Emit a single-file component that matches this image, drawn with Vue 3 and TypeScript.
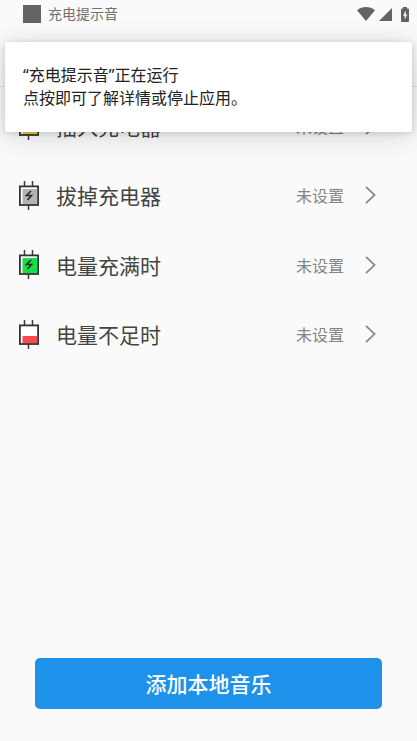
<script setup lang="ts">
interface Row {
  label: string
  value: string
  fill: string
  level: number
  bolt: boolean
}

const appName = '充电提示音'

const rows: Row[] = [
  { label: '插入充电器', value: '未设置', fill: '#f0cb3a', level: 15, bolt: true },
  { label: '拔掉充电器', value: '未设置', fill: '#b3b3b3', level: 15, bolt: true },
  { label: '电量充满时', value: '未设置', fill: '#14df46', level: 15, bolt: true },
  { label: '电量不足时', value: '未设置', fill: '#fb4a4a', level: 7, bolt: false },
]
</script>

<template>
  <div class="screen">
    <header class="status">
      <span class="app-mark"></span>
      <span class="app-name">{{ appName }}</span>
      <svg class="wifi" viewBox="0 0 18 14" aria-hidden="true">
        <path d="M9 14 0 3.2C2.6 1 5.700 0 9 0s6.400 1 9 3.200z" />
      </svg>
      <svg class="signal" viewBox="0 0 13 13" aria-hidden="true">
        <path d="M13 0v13H0z" />
      </svg>
      <svg class="battery" viewBox="0 0 8 15" aria-hidden="true">
        <path d="M2 0h4v1.500h1a1 1 0 0 1 1 1V14a1 1 0 0 1-1 1H1a1 1 0 0 1-1-1V2.500a1 1 0 0 1 1-1h1z" />
        <path class="battery-bolt" d="M4.700 3.500 2 8.800h1.700v3.700L6.200 7.500H4.700z" />
      </svg>
    </header>
    <div class="toolbar"></div>

    <ul class="list">
      <li v-for="row in rows" :key="row.label">
        <button type="button" class="row">
          <svg class="plug" viewBox="0 0 20 29" aria-hidden="true">
            <path class="line" d="M5.500 0v5M13.500 0v5M9.500 24v5" />
            <rect class="case" x="0.900" y="5.400" width="18.200" height="18.600" />
            <rect x="3.500" :y="23 - row.level" width="14.500" :height="row.level" :fill="row.fill" />
            <path v-if="row.bolt" class="bolt" d="M12 10 7.500 14.500h5L8.500 19" />
          </svg>
          <span class="label">{{ row.label }}</span>
          <span class="value">{{ row.value }}</span>
          <svg class="chevron" viewBox="0 0 11 18" aria-hidden="true">
            <path d="M1 .8 9.600 9 1 17.200" />
          </svg>
        </button>
      </li>
    </ul>

    <footer class="footer">
      <button type="button" class="add">添加本地音乐</button>
    </footer>

    <div class="notice" role="status">
      “{{ appName }}”正在运行<br />点按即可了解详情或停止应用。
    </div>
  </div>
</template>

<style>
body {
  background: #fafafa;
}
</style>

<style scoped>
.screen {
  position: relative;
  display: flex;
  flex-direction: column;
  min-height: 100vh;
  overflow: hidden;
  background: #fafafa;
  font-family: "Noto Sans", "Noto Sans CJK SC", sans-serif;
}

button {
  margin: 0;
  border: 0;
  font: inherit;
}

.status {
  display: flex;
  align-items: center;
  height: 28px;
  padding: 0 8px 0 23px;
  color: #707070;
}

.app-mark {
  width: 18px;
  height: 18px;
  background: #646464;
}

.app-name {
  flex: 1;
  margin-left: 7px;
  font-size: 14px;
  line-height: 20px;
}

.status svg {
  fill: #636363;
}

.wifi {
  width: 18px;
  height: 14px;
}

.signal {
  width: 13px;
  height: 13px;
  margin-left: 4px;
}

.battery {
  width: 8px;
  height: 15px;
  margin-left: 9px;
}

.status .battery-bolt {
  fill: #fafafa;
}

.toolbar {
  height: 58px;
  border-bottom: 1px solid #e0e0e0;
}

.list {
  display: grid;
  grid-template-rows: repeat(4, 1fr);
  height: 278px;
  margin: 4px 0 0;
  padding: 0;
  list-style: none;
}

.row {
  display: flex;
  align-items: center;
  width: 100%;
  height: 100%;
  padding: 0 41px 0 19px;
  background: none;
  text-align: left;
}

.plug {
  width: 20px;
  height: 29px;
}

.line {
  stroke: #3c3c3c;
  stroke-width: 1.5;
}

.case {
  fill: #fff;
  stroke: #333;
  stroke-width: 1.8;
}

.bolt {
  fill: none;
  stroke: #2b2b2b;
  stroke-width: 1.6;
}

.label,
.value {
  padding-top: 2px;
}

.label {
  flex: 1;
  margin-left: 17px;
  color: #444;
  font-size: 21px;
  line-height: 30px;
}

.value {
  color: #858585;
  font-size: 16px;
  line-height: 24px;
}

.chevron {
  width: 11px;
  height: 18px;
  margin-left: 21px;
  fill: none;
  stroke: #8c8c8c;
  stroke-width: 1.8;
}

.footer {
  margin-top: auto;
  padding: 0 35px 32px;
}

.add {
  display: block;
  width: 100%;
  height: 51px;
  border-radius: 5px;
  background: #1e92ea;
  color: #fff;
  font-size: 21px;
  font-weight: 500;
  line-height: 30px;
}

.notice {
  position: absolute;
  top: 42px;
  right: 5px;
  left: 5px;
  padding: 22px 18px;
  border-radius: 2px;
  background: #fff;
  box-shadow: 0 3px 28px rgba(0, 0, 0, 0.16), 0 1px 6px rgba(0, 0, 0, 0.14);
  color: #222;
  font-size: 16px;
  line-height: 23px;
}
</style>
